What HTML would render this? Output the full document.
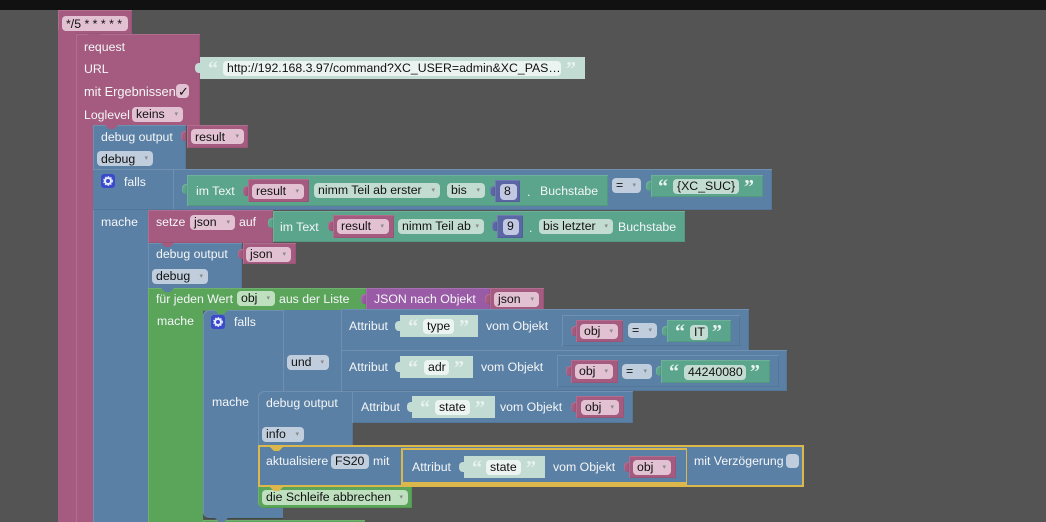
<!DOCTYPE html>
<html><head><meta charset="utf-8"><style>
html,body{margin:0;padding:0;background:#545454}
#w{position:relative;width:1046px;height:522px;overflow:hidden;background:#545454;font:12.3px/16px "Liberation Sans",sans-serif}
#w div{position:absolute;box-sizing:border-box;white-space:nowrap}
.p{background:#a55b80;box-shadow:inset 1px 1px 0 #b06d8e,inset -1px -1px 0 #985575}
.b{background:#5b80a5;box-shadow:inset 1px 1px 0 #6f90b0,inset -1px -1px 0 #547698}
.t{background:#5ba58c;box-shadow:inset 1px 1px 0 #6fb09a,inset -1px -1px 0 #549881}
.g{background:#5ba55b;box-shadow:inset 1px 1px 0 #6fb06f,inset -1px -1px 0 #549854}
.v{background:#995ba5;box-shadow:inset 1px 1px 0 #a56fb0,inset -1px -1px 0 #8d5498}
.i{background:#5b67a5;box-shadow:inset 1px 1px 0 #6f7ab0,inset -1px -1px 0 #545f98}
.s{background:#c3dcd3}
.x{color:#f4f6f8;height:16px}
.f{color:#111;height:15px;line-height:15px;border-radius:4px;padding-left:4px}
.fp{background:#e2c1d2}.fb{background:#bfcddd}.ft{background:#c2dcd2}.fg{background:#bfe0bf}.fw{background:#ecf4f1}.fi{background:#c3c8e2}
.f span{position:absolute;right:5px;top:0;font-size:7px;color:#8a8a8a}
.q{font:bold 20px/18px "Liberation Serif",serif;color:#e6f2ee}
.tab{width:5px;height:10px;border-radius:4px 0 0 4px}
.n{width:13px;height:4px;clip-path:polygon(0 0,100% 0,70% 100%,30% 100%)}
</style></head><body><div id="w">
<div style="left:0;top:0;width:1046px;height:10px;background:#111"></div>

<div class="p" style="left:58px;top:10px;width:74px;height:24px"></div>
<div class="p" style="left:58px;top:30px;width:18px;height:492px;box-shadow:none"></div>
<div class="f fp" style="left:62px;top:16px;width:66px;height:15px;line-height:16px">*/5 * * * * *</div>
<div class="p" style="left:76px;top:34px;width:124px;height:92px"></div>
<div class="p" style="left:76px;top:120px;width:17px;height:402px;box-shadow:inset 1px 0 0 #b06d8e"></div>
<div class="n" style="left:88px;top:34px;background:#a55b80"></div>
<div class="x" style="left:84px;top:39px">request</div>
<div class="x" style="left:84px;top:61px">URL</div>
<div class="x" style="left:84px;top:84px;font-size:12.8px">mit Ergebnissen</div>
<div class="f fp" style="left:176px;top:84px;width:13px;height:14px;padding-left:2px;font-size:13px">✓</div>
<div class="x" style="left:84px;top:107px">Loglevel</div>
<div class="f fp" style="left:132px;top:107px;width:51px">keins<span>▾</span></div>

<div class="s" style="left:200px;top:57px;width:385px;height:22px"></div>
<div class="s tab" style="left:195px;top:63px"></div>
<div class="q" style="left:208px;top:60px">“</div>
<div class="f fw" style="left:223px;top:61px;width:338px;height:15px">http://192.168.3.97/command?XC_USER=admin&amp;XC_PAS…</div>
<div class="q" style="left:566px;top:60px">”</div>

<div class="b" style="left:93px;top:125px;width:93px;height:46px"></div>
<div class="n" style="left:105px;top:125px;background:#a55b80"></div>
<div class="p" style="left:187px;top:125px;width:61px;height:23px"></div>
<div class="p tab" style="left:181px;top:131px"></div>
<div class="x" style="left:101px;top:129px">debug output</div>
<div class="f fp" style="left:191px;top:129px;width:53px;line-height:16px">result<span>▾</span></div>
<div class="f fb" style="left:97px;top:151px;width:56px;line-height:16px">debug<span>▾</span></div>

<div class="b" style="left:93px;top:169px;width:55px;height:353px;box-shadow:inset 1px 0 0 #6f90b0"></div>
<div class="b" style="left:93px;top:169px;width:679px;height:41px;box-shadow:inset 0 1px 0 #6f90b0,inset -1px -1px 0 #547698"></div>
<div style="left:173px;top:170px;width:1px;height:39px;background:#6f90b0"></div>
<div style="left:101px;top:174px;width:14px;height:14px;border-radius:3px;background:#3a4acb"></div>
<svg style="position:absolute;left:103px;top:176px" width="10" height="10" viewBox="0 0 10 10"><circle cx="5" cy="5" r="3" fill="none" stroke="#e8ecff" stroke-width="2"/><circle cx="5" cy="5" r="4.4" fill="none" stroke="#e8ecff" stroke-width="1" stroke-dasharray="1.5 1.4"/></svg>
<div class="x" style="left:124px;top:174px">falls</div>
<div class="x" style="left:101px;top:214px">mache</div>

<div class="t" style="left:187px;top:175px;width:421px;height:31px"></div>
<div class="t tab" style="left:182px;top:184px"></div>
<div class="x" style="left:196px;top:183px">im Text</div>
<div class="p" style="left:248px;top:179px;width:61px;height:23px"></div>
<div class="p tab" style="left:243px;top:186px"></div>
<div class="f fp" style="left:252px;top:184px;width:52px">result<span>▾</span></div>
<div class="f ft" style="left:314px;top:183px;width:126px">nimm Teil ab erster<span>▾</span></div>
<div class="f ft" style="left:447px;top:183px;width:38px">bis<span>▾</span></div>
<div class="i" style="left:495px;top:180px;width:25px;height:22px"></div>
<div class="i tab" style="left:490px;top:186px"></div>
<div class="f fi" style="left:500px;top:184px;width:17px;height:16px">8</div>
<div class="x" style="left:527px;top:184px">.</div>
<div class="x" style="left:540px;top:183px">Buchstabe</div>
<div class="f fb" style="left:612px;top:178px;width:29px">=<span>▾</span></div>
<div class="t" style="left:651px;top:175px;width:112px;height:22px"></div>
<div class="t tab" style="left:646px;top:181px"></div>
<div class="q" style="left:658px;top:178px">“</div>
<div class="f ft" style="left:673px;top:179px;width:66px">{XC_SUC}</div>
<div class="q" style="left:744px;top:178px">”</div>

<div class="b" style="left:148px;top:243px;width:94px;height:46px"></div>
<div class="p" style="left:148px;top:210px;width:125px;height:33px"></div>
<div class="n" style="left:161px;top:243px;background:#a55b80"></div>
<div class="x" style="left:156px;top:214px">setze</div>
<div class="f fp" style="left:190px;top:215px;width:45px">json<span>▾</span></div>
<div class="x" style="left:239px;top:214px">auf</div>
<div class="t" style="left:273px;top:211px;width:412px;height:31px"></div>
<div class="t tab" style="left:268px;top:218px"></div>
<div class="x" style="left:280px;top:219px">im Text</div>
<div class="p" style="left:333px;top:215px;width:61px;height:23px"></div>
<div class="p tab" style="left:328px;top:221px"></div>
<div class="f fp" style="left:337px;top:219px;width:52px">result<span>▾</span></div>
<div class="f ft" style="left:398px;top:219px;width:86px">nimm Teil ab<span>▾</span></div>
<div class="i" style="left:497px;top:215px;width:26px;height:23px"></div>
<div class="i tab" style="left:492px;top:221px"></div>
<div class="f fi" style="left:503px;top:219px;width:16px;height:16px">9</div>
<div class="x" style="left:529px;top:220px">.</div>
<div class="f ft" style="left:539px;top:219px;width:74px">bis letzter<span>▾</span></div>
<div class="x" style="left:618px;top:219px">Buchstabe</div>

<div class="x" style="left:156px;top:246px">debug output</div>
<div class="p" style="left:243px;top:243px;width:53px;height:21px"></div>
<div class="p tab" style="left:238px;top:249px"></div>
<div class="f fp" style="left:246px;top:247px;width:45px">json<span>▾</span></div>
<div class="f fb" style="left:152px;top:269px;width:56px">debug<span>▾</span></div>

<div class="g" style="left:148px;top:288px;width:218px;height:23px"></div>
<div class="g" style="left:148px;top:305px;width:55px;height:217px;box-shadow:inset 1px 0 0 #6fb06f"></div>
<div class="n" style="left:161px;top:288px;background:#5b80a5"></div>
<div class="x" style="left:156px;top:291px">für jeden Wert</div>
<div class="f fg" style="left:237px;top:291px;width:38px">obj<span>▾</span></div>
<div class="x" style="left:279px;top:291px">aus der Liste</div>
<div class="v" style="left:366px;top:288px;width:124px;height:22px"></div>
<div class="v tab" style="left:361px;top:294px"></div>
<div class="x" style="left:374px;top:291px">JSON nach Objekt</div>
<div class="p" style="left:490px;top:288px;width:54px;height:22px"></div>
<div class="p tab" style="left:485px;top:294px"></div>
<div class="f fp" style="left:494px;top:292px;width:45px">json<span>▾</span></div>
<div class="x" style="left:157px;top:313px">mache</div>

<div class="g" style="left:203px;top:520px;width:162px;height:4px"></div>
<div class="b" style="left:203px;top:310px;width:80px;height:208px;box-shadow:inset 1px 1px 0 #6f90b0,0 1px 0 #3c4c3c;border-radius:6px 0 0 6px"></div>
<div class="n" style="left:215px;top:518px;background:#5b80a5"></div>
<div class="n" style="left:215px;top:310px;background:#5ba55b"></div>
<div class="b" style="left:283px;top:310px;width:60px;height:82px;box-shadow:inset 1px 0 0 #6f90b0"></div>
<div style="left:211px;top:315px;width:14px;height:14px;border-radius:3px;background:#3a4acb"></div>
<svg style="position:absolute;left:213px;top:317px" width="10" height="10" viewBox="0 0 10 10"><circle cx="5" cy="5" r="3" fill="none" stroke="#e8ecff" stroke-width="2"/><circle cx="5" cy="5" r="4.4" fill="none" stroke="#e8ecff" stroke-width="1" stroke-dasharray="1.5 1.4"/></svg>
<div class="x" style="left:234px;top:314px">falls</div>
<div class="f fb" style="left:287px;top:355px;width:42px">und<span>▾</span></div>
<div class="x" style="left:212px;top:394px">mache</div>

<div class="b" style="left:341px;top:309px;width:408px;height:42px"></div>
<div class="x" style="left:349px;top:318px">Attribut</div>
<div class="s" style="left:400px;top:315px;width:78px;height:22px"></div>
<div class="s tab" style="left:395px;top:321px"></div>
<div class="q" style="left:408px;top:318px">“</div>
<div class="f fw" style="left:423px;top:319px;width:31px">type</div>
<div class="q" style="left:459px;top:318px">”</div>
<div class="x" style="left:486px;top:318px">vom Objekt</div>
<div class="b" style="left:562px;top:315px;width:178px;height:31px"></div>
<div class="p" style="left:576px;top:320px;width:47px;height:22px"></div>
<div class="p tab" style="left:571px;top:326px"></div>
<div class="f fp" style="left:580px;top:324px;width:38px">obj<span>▾</span></div>
<div class="f fb" style="left:628px;top:323px;width:29px">=<span>▾</span></div>
<div class="t" style="left:667px;top:320px;width:64px;height:22px"></div>
<div class="t tab" style="left:662px;top:326px"></div>
<div class="q" style="left:675px;top:323px">“</div>
<div class="f ft" style="left:690px;top:325px;width:18px">IT</div>
<div class="q" style="left:712px;top:323px">”</div>

<div class="b" style="left:341px;top:350px;width:446px;height:41px"></div>
<div class="x" style="left:349px;top:359px">Attribut</div>
<div class="s" style="left:400px;top:356px;width:73px;height:22px"></div>
<div class="s tab" style="left:395px;top:362px"></div>
<div class="q" style="left:408px;top:359px">“</div>
<div class="f fw" style="left:424px;top:360px;width:25px">adr</div>
<div class="q" style="left:454px;top:359px">”</div>
<div class="x" style="left:481px;top:359px">vom Objekt</div>
<div class="b" style="left:557px;top:355px;width:222px;height:32px"></div>
<div class="p" style="left:571px;top:360px;width:47px;height:23px"></div>
<div class="p tab" style="left:566px;top:366px"></div>
<div class="f fp" style="left:575px;top:364px;width:38px">obj<span>▾</span></div>
<div class="f fb" style="left:622px;top:364px;width:30px">=<span>▾</span></div>
<div class="t" style="left:661px;top:360px;width:109px;height:23px"></div>
<div class="t tab" style="left:656px;top:366px"></div>
<div class="q" style="left:669px;top:363px">“</div>
<div class="f ft" style="left:684px;top:365px;width:62px">44240080</div>
<div class="q" style="left:750px;top:363px">”</div>

<div class="b" style="left:258px;top:391px;width:95px;height:55px;border-radius:6px 0 0 0"></div>
<div class="x" style="left:266px;top:395px">debug output</div>
<div class="f fb" style="left:262px;top:427px;width:42px">info<span>▾</span></div>
<div class="b" style="left:352px;top:391px;width:281px;height:32px"></div>
<div class="x" style="left:361px;top:399px">Attribut</div>
<div class="s" style="left:412px;top:396px;width:83px;height:22px"></div>
<div class="s tab" style="left:407px;top:402px"></div>
<div class="q" style="left:420px;top:399px">“</div>
<div class="f fw" style="left:435px;top:400px;width:35px">state</div>
<div class="q" style="left:475px;top:399px">”</div>
<div class="x" style="left:500px;top:399px">vom Objekt</div>
<div class="p" style="left:576px;top:396px;width:48px;height:22px"></div>
<div class="p tab" style="left:571px;top:402px"></div>
<div class="f fp" style="left:581px;top:400px;width:38px">obj<span>▾</span></div>

<div class="g" style="left:258px;top:484px;width:154px;height:24px;border-radius:0 0 0 6px"></div>
<div class="f fg" style="left:262px;top:490px;width:146px">die Schleife abbrechen<span>▾</span></div>

<div style="left:258px;top:445px;width:546px;height:42px;background:#5b80a5;border:2px solid #dcb84c"></div>
<div style="left:401px;top:448px;width:286px;height:37px;background:#5b80a5;border:2px solid #dcb84c;border-bottom-width:3px;border-right-width:1px"></div>
<div class="n" style="left:270px;top:447px;background:#dcb84c"></div>
<div class="n" style="left:270px;top:487px;background:#dcb84c"></div>
<div class="x" style="left:266px;top:453px">aktualisiere</div>
<div class="f fb" style="left:331px;top:454px;width:38px">FS20</div>
<div class="x" style="left:373px;top:453px">mit</div>
<div class="x" style="left:412px;top:459px">Attribut</div>
<div class="s" style="left:464px;top:456px;width:81px;height:22px"></div>
<div class="s tab" style="left:459px;top:462px"></div>
<div class="q" style="left:472px;top:459px">“</div>
<div class="f fw" style="left:486px;top:460px;width:35px">state</div>
<div class="q" style="left:526px;top:459px">”</div>
<div class="x" style="left:553px;top:459px">vom Objekt</div>
<div class="p" style="left:629px;top:456px;width:47px;height:22px"></div>
<div class="p tab" style="left:624px;top:462px"></div>
<div class="f fp" style="left:633px;top:460px;width:38px">obj<span>▾</span></div>
<div class="x" style="left:694px;top:453px">mit Verzögerung</div>
<div class="f fb" style="left:786px;top:454px;width:13px;height:14px"></div>
</div></body></html>
